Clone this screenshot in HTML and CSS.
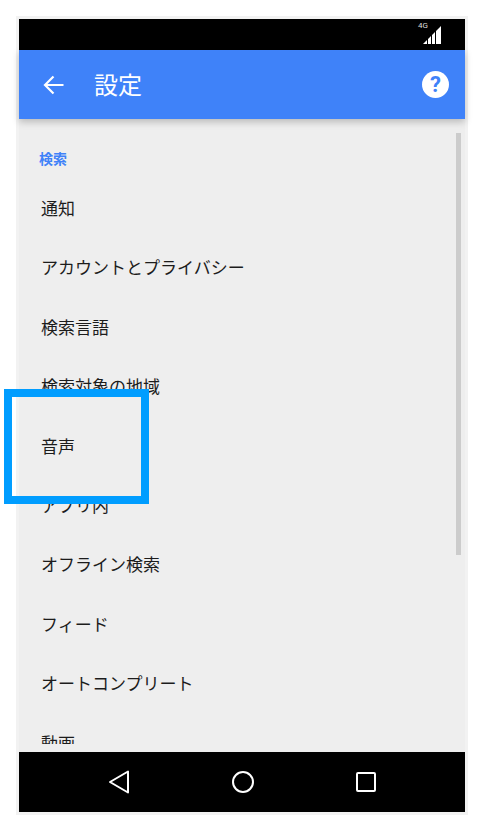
FILE: index.html
```html
<!DOCTYPE html>
<html lang="ja">
<head>
    <meta charset="UTF-8">
    <title>設定</title>
    <link rel="stylesheet" href="styles.css">
</head>
<body>
    <div class="phone">
        <div class="status-bar">
            <div class="signal">
                <span class="signal-label">4G</span>
                <svg width="20" height="19" viewBox="0 0 20 19">
                    <path d="M1 18 L5 14 V18 Z M6 18 V13 L9 10 V18 Z M10 18 V9 L13 6 V18 Z M14 18 V5 L19 0 V18 Z" fill="#fff"/>
                </svg>
            </div>
        </div>
        <header class="app-bar">
            <svg class="back-icon" width="24" height="24" viewBox="0 0 24 24">
                <path d="M21.5 12 H3.5 M11.5 3.5 L3 12 L11.5 20.5" fill="none" stroke="#fff" stroke-width="2.2"/>
            </svg>
            <h1 class="title">設定</h1>
            <div class="help-icon">?</div>
        </header>
        <main class="content">
            <div class="list">
                <div class="section-label">検索</div>
                <div class="item">通知</div>
                <div class="item">アカウントとプライバシー</div>
                <div class="item">検索言語</div>
                <div class="item">検索対象の地域</div>
                <div class="item">音声</div>
                <div class="item">アプリ内</div>
                <div class="item">オフライン検索</div>
                <div class="item">フィード</div>
                <div class="item">オートコンプリート</div>
                <div class="item">動画</div>
            </div>
            <div class="scrollbar"></div>
        </main>
        <nav class="nav-bar">
            <svg width="24" height="26" viewBox="0 0 24 26">
                <path d="M21 2.5 V23.5 L3 13 Z" fill="none" stroke="#fff" stroke-width="2" stroke-linejoin="round"/>
            </svg>
            <svg width="24" height="24" viewBox="0 0 24 24">
                <circle cx="12" cy="12" r="10" fill="none" stroke="#fff" stroke-width="2"/>
            </svg>
            <svg width="22" height="22" viewBox="0 0 22 22">
                <rect x="2" y="2" width="18" height="18" rx="1" fill="none" stroke="#fff" stroke-width="2"/>
            </svg>
        </nav>
    </div>
    <div class="highlight"></div>
</body>
</html>
```

FILE: styles.css
```css
html, body {
    margin: 0;
    padding: 0;
}

body {
    width: 484px;
    height: 831px;
    background-color: #fff;
    font-family: "Noto Sans CJK JP", "Roboto", sans-serif;
    overflow: hidden;
    position: relative;
}

.phone {
    width: 446px;
    height: 793px;
    margin: 16px 0 0 16px;
    border: 3px solid #f2f2f2;
    display: flex;
    flex-direction: column;
}

.status-bar {
    height: 31px;
    background-color: #000;
    display: flex;
    justify-content: flex-end;
    flex-shrink: 0;
}

.signal {
    display: flex;
    align-items: flex-end;
    padding: 0 23px 5px 0;
    position: relative;
}

.signal-label {
    position: absolute;
    top: 2px;
    left: -4px;
    font-family: "Roboto", sans-serif;
    font-size: 8px;
    line-height: 10px;
    color: #ddd;
}

.app-bar {
    height: 69px;
    background-color: #3f82f9;
    display: flex;
    align-items: center;
    padding: 0 16px 0 23px;
    flex-shrink: 0;
    position: relative;
    z-index: 1;
    box-shadow: 0 3px 7px rgba(0, 0, 0, 0.22);
}

.back-icon {
    margin-right: 28px;
}

.title {
    margin: 0 0 2px;
    font-size: 24px;
    font-weight: 400;
    color: #fff;
    flex: 1;
}

.help-icon {
    width: 27px;
    height: 27px;
    border-radius: 50%;
    background-color: #fff;
    color: #3f82f9;
    font-family: "Roboto", sans-serif;
    font-size: 22px;
    font-weight: 700;
    line-height: 27px;
    text-align: center;
}

.content {
    flex: 1;
    background-color: #eee;
    padding-bottom: 8px;
    position: relative;
    min-height: 0;
    display: flex;
}

.list {
    flex: 1;
    overflow: hidden;
    padding-left: 22px;
}

.section-label {
    margin: 29px 0 10px -2px;
    height: 20px;
    font-size: 14px;
    line-height: 20px;
    font-weight: 700;
    color: #3f82f9;
}

.item {
    height: 59.4px;
    line-height: 59.4px;
    font-size: 17px;
    font-weight: 400;
    color: #1c1c1c;
    white-space: nowrap;
}

.scrollbar {
    position: absolute;
    top: 14px;
    right: 4px;
    width: 5px;
    height: 422px;
    background-color: #ccc;
}

.nav-bar {
    height: 60px;
    background-color: #000;
    flex-shrink: 0;
    display: flex;
    align-items: center;
    justify-content: center;
    gap: 100px;
    padding-right: 1px;
}

.highlight {
    position: absolute;
    left: 4px;
    top: 389px;
    width: 129px;
    height: 99px;
    border: 8px solid #009dff;
}
```
